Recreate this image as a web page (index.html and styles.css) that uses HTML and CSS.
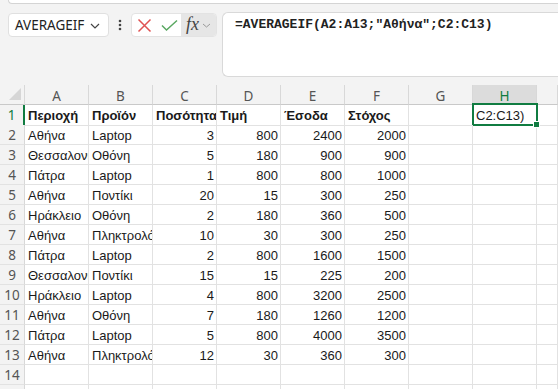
FILE: index.html
```html
<!DOCTYPE html>
<html lang="el">
<head>
    <meta charset="UTF-8">
    <meta name="viewport" content="width=device-width, initial-scale=1.0">
    <title>AVERAGEIF</title>
    <link rel="stylesheet" href="styles.css">
</head>
<body>

    <div class="ribbon-edge"></div>

    <div class="formula-bar">
        <div class="name-box">
            <span>AVERAGEIF</span>
            <svg class="chev" width="10" height="6" viewBox="0 0 10 6"><polyline points="1,1 5,5 9,1" fill="none" stroke="#444" stroke-width="1.2"/></svg>
        </div>
        <div class="more">
            <svg width="4" height="12" viewBox="0 0 4 12"><circle cx="2" cy="2" r="1.3" fill="#444"/><circle cx="2" cy="6" r="1.3" fill="#444"/><circle cx="2" cy="10" r="1.3" fill="#444"/></svg>
        </div>
        <div class="actions">
            <span class="act">
                <svg width="15" height="15" viewBox="0 0 15 15"><path d="M1.5 1.5 L13.5 13.5 M13.5 1.5 L1.5 13.5" stroke="#e05252" stroke-width="1.5" fill="none"/></svg>
            </span>
            <span class="act">
                <svg width="17" height="13" viewBox="0 0 17 13"><polyline points="1,6.5 5.5,11 16,1.5" stroke="#5aa862" stroke-width="1.5" fill="none"/></svg>
            </span>
            <span class="act fx">
                <i>fx</i>
                <svg width="9" height="5" viewBox="0 0 9 5"><polyline points="1,1 4.5,4 8,1" fill="none" stroke="#999" stroke-width="1"/></svg>
            </span>
        </div>
        <div class="formula">=AVERAGEIF(A2:A13;"Αθήνα";C2:C13)</div>
    </div>

    <div class="sheet">
        <div class="row head">
            <div class="corner"><svg width="12" height="12" viewBox="0 0 12 12"><polygon points="12,0 12,12 0,12" fill="#d6d6d6"/></svg></div>
            <div>A</div><div>B</div><div>C</div><div>D</div><div>E</div><div>F</div><div>G</div><div class="sel">H</div><div></div>
        </div>
        <div class="row bold">
            <div class="num sel">1</div>
            <div>Περιοχή</div><div>Προϊόν</div><div>Ποσότητα</div><div>Τιμή</div><div>Έσοδα</div><div>Στόχος</div><div></div><div class="active">C2:C13)</div><div></div>
        </div>
        <div class="row">
            <div class="num">2</div>
            <div>Αθήνα</div><div>Laptop</div><div class="n">3</div><div class="n">800</div><div class="n">2400</div><div class="n">2000</div><div></div><div></div><div></div>
        </div>
        <div class="row">
            <div class="num">3</div>
            <div>Θεσσαλονίκη</div><div>Οθόνη</div><div class="n">5</div><div class="n">180</div><div class="n">900</div><div class="n">900</div><div></div><div></div><div></div>
        </div>
        <div class="row">
            <div class="num">4</div>
            <div>Πάτρα</div><div>Laptop</div><div class="n">1</div><div class="n">800</div><div class="n">800</div><div class="n">1000</div><div></div><div></div><div></div>
        </div>
        <div class="row">
            <div class="num">5</div>
            <div>Αθήνα</div><div>Ποντίκι</div><div class="n">20</div><div class="n">15</div><div class="n">300</div><div class="n">250</div><div></div><div></div><div></div>
        </div>
        <div class="row">
            <div class="num">6</div>
            <div>Ηράκλειο</div><div>Οθόνη</div><div class="n">2</div><div class="n">180</div><div class="n">360</div><div class="n">500</div><div></div><div></div><div></div>
        </div>
        <div class="row">
            <div class="num">7</div>
            <div>Αθήνα</div><div>Πληκτρολόγιο</div><div class="n">10</div><div class="n">30</div><div class="n">300</div><div class="n">250</div><div></div><div></div><div></div>
        </div>
        <div class="row">
            <div class="num">8</div>
            <div>Πάτρα</div><div>Laptop</div><div class="n">2</div><div class="n">800</div><div class="n">1600</div><div class="n">1500</div><div></div><div></div><div></div>
        </div>
        <div class="row">
            <div class="num">9</div>
            <div>Θεσσαλονίκη</div><div>Ποντίκι</div><div class="n">15</div><div class="n">15</div><div class="n">225</div><div class="n">200</div><div></div><div></div><div></div>
        </div>
        <div class="row">
            <div class="num">10</div>
            <div>Ηράκλειο</div><div>Laptop</div><div class="n">4</div><div class="n">800</div><div class="n">3200</div><div class="n">2500</div><div></div><div></div><div></div>
        </div>
        <div class="row">
            <div class="num">11</div>
            <div>Αθήνα</div><div>Οθόνη</div><div class="n">7</div><div class="n">180</div><div class="n">1260</div><div class="n">1200</div><div></div><div></div><div></div>
        </div>
        <div class="row">
            <div class="num">12</div>
            <div>Πάτρα</div><div>Laptop</div><div class="n">5</div><div class="n">800</div><div class="n">4000</div><div class="n">3500</div><div></div><div></div><div></div>
        </div>
        <div class="row">
            <div class="num">13</div>
            <div>Αθήνα</div><div>Πληκτρολόγιο</div><div class="n">12</div><div class="n">30</div><div class="n">360</div><div class="n">300</div><div></div><div></div><div></div>
        </div>
        <div class="row">
            <div class="num">14</div>
            <div></div><div></div><div></div><div></div><div></div><div></div><div></div><div></div><div></div>
        </div>
        <div class="row">
            <div class="num">15</div>
            <div></div><div></div><div></div><div></div><div></div><div></div><div></div><div></div><div></div>
        </div>
    </div>

</body>
</html>
```

FILE: styles.css
```css
body {
    margin: 0;
    background-color: #f3f3f3;
    font-family: "Liberation Sans", Arial, sans-serif;
    overflow: hidden;
}

.ribbon-edge {
    height: 3px;
    margin-left: 8px;
    background-color: #fff;
    border: 1px solid #d4d4d4;
    border-top: none;
    border-right: none;
    border-bottom-left-radius: 6px;
}

.formula-bar {
    height: 81px;
    box-sizing: border-box;
    display: flex;
    align-items: flex-start;
    padding: 8px 0 0 8px;
}

.name-box {
    width: 101px;
    height: 24px;
    margin-top: 1px;
    box-sizing: border-box;
    display: flex;
    align-items: center;
    justify-content: space-between;
    padding: 0 8px 0 6px;
    background-color: #fff;
    border: 1px solid #e0e0e0;
    border-radius: 4px;
    font-family: "Noto Sans", sans-serif;
    font-size: 13.5px;
    color: #222;
}

.name-box .chev {
    margin-top: 2px;
}

.more {
    width: 22px;
    height: 24px;
    margin-top: 1px;
    display: flex;
    align-items: center;
    justify-content: center;
}

.actions {
    width: 86px;
    height: 24px;
    margin-top: 1px;
    box-sizing: border-box;
    display: flex;
    background-color: #fff;
    border: 1px solid #e3e3e3;
    border-radius: 4px;
    overflow: hidden;
}

.act {
    width: 24px;
    display: flex;
    align-items: center;
    justify-content: center;
}

.act:first-child {
    width: 25px;
}

.act.fx {
    flex: 1;
    gap: 3px;
    background-color: #e6e6e6;
}

.act.fx i {
    font-family: "Liberation Serif", serif;
    font-size: 18px;
    color: #444;
    margin-top: -2px;
}

.formula {
    flex: 1;
    height: 65px;
    margin-left: 5px;
    box-sizing: border-box;
    padding: 4px 12px;
    background-color: #fff;
    border: 1px solid #d9d9d9;
    border-right: none;
    border-radius: 6px 0 0 6px;
    font-family: "Liberation Mono", monospace;
    font-weight: bold;
    font-size: 13px;
    color: #222;
}

.sheet {
    background-color: #fff;
}

.row {
    display: grid;
    grid-template-columns: 25px repeat(8, 64px) 1fr;
    height: 20px;
    font-size: 13px;
    color: #1a1a1a;
}

.row > div {
    position: relative;
    box-sizing: border-box;
    padding: 2px 3px 0;
    line-height: 18px;
    white-space: nowrap;
    overflow: hidden;
    border-right: 1px solid #e2e2e2;
    border-bottom: 1px solid #e2e2e2;
}

.row .n {
    text-align: right;
    padding-right: 2px;
}

.bold > div {
    font-weight: bold;
}

.head > div {
    background-color: #f3f3f3;
    border-right-color: #d8d8d8;
    border-bottom-color: #c9c9c9;
    text-align: center;
    font-family: "Noto Sans", sans-serif;
    font-size: 13.5px;
    color: #555;
}

.head .corner {
    display: flex;
    align-items: flex-end;
    justify-content: flex-end;
    padding: 0 3px 4px 0;
}

.head .sel {
    background-color: #dcdcdc;
    color: #107c41;
    border-bottom: 2px solid #107c41;
}

.row .num {
    background-color: #f3f3f3;
    border-right-color: #d8d8d8;
    border-bottom-color: #e2e2e2;
    text-align: center;
    padding: 1px 0 0;
    font-family: "Noto Sans", sans-serif;
    font-weight: normal;
    font-size: 13.5px;
    color: #555;
}

.row .num.sel {
    color: #107c41;
    border-right: 2px solid #107c41;
}

.row .active {
    overflow: visible;
    font-weight: normal;
}

.active::after {
    content: "";
    position: absolute;
    top: -2px;
    left: -1px;
    right: -2px;
    bottom: -1px;
    border: 2px solid #107c41;
}

.active::before {
    content: "";
    position: absolute;
    right: -4px;
    bottom: -3px;
    width: 5px;
    height: 5px;
    background-color: #107c41;
    border: 1px solid #fff;
    z-index: 1;
}
```
